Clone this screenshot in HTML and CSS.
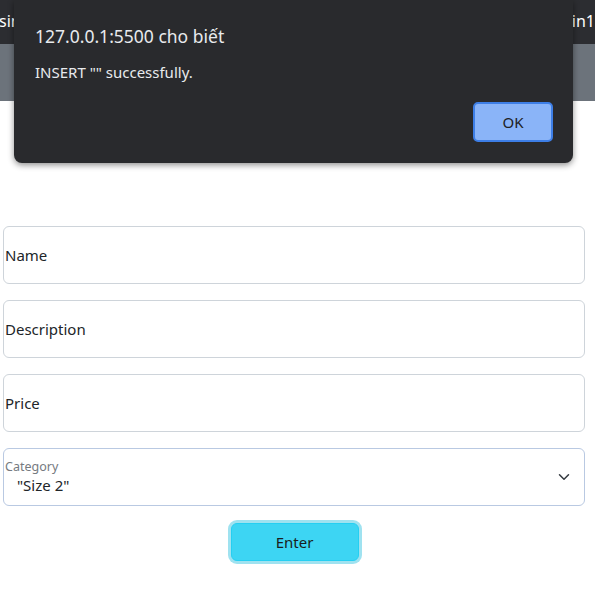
FILE: index.html
```html
<!DOCTYPE html>
<html lang="vi">
<head>
<meta charset="utf-8">
<title>Insert</title>
<link rel="stylesheet" href="styles.css">
</head>
<body>
<nav class="topbar">
  <span class="brand">sin</span>
  <span class="user">admin1</span>
</nav>
<header class="banner"></header>
<main class="page">
  <form class="form">
    <div class="field"><span class="field-label">Name</span></div>
    <div class="field"><span class="field-label">Description</span></div>
    <div class="field"><span class="field-label">Price</span></div>
    <div class="field select-field">
      <span class="small-label">Category</span>
      <span class="select-value">"Size 2"</span>
      <svg class="chevron" viewBox="0 0 16 16" width="16" height="12"><path d="m2 5 6 6 6-6" fill="none" stroke="#343a40" stroke-width="2" stroke-linecap="round" stroke-linejoin="round"/></svg>
    </div>
    <div class="actions"><button type="button" class="btn-enter">Enter</button></div>
  </form>
</main>
<div class="dialog">
  <div class="dialog-title">127.0.0.1:5500 cho biết</div>
  <div class="dialog-msg">INSERT "" successfully.</div>
  <div class="dialog-actions"><button type="button" class="btn-ok">OK</button></div>
</div>
</body>
</html>
```
FILE: styles.css
```css
* { box-sizing: border-box; }
html, body { margin: 0; padding: 0; background: #fff; }
body { font-family: "Open Sans", "Noto Sans", sans-serif; color: #212529; }

.topbar {
  height: 44px;
  background: #2c2d31;
  color: #fff;
  display: flex;
  justify-content: space-between;
  align-items: center;
  font-family: "Noto Sans", sans-serif;
  font-size: 16px;
  padding-bottom: 2px;
}
.brand { margin-left: -1px; }
.banner { height: 57px; background: #6c737b; }

.page { padding: 125px 10px 40px 3px; }
.form { display: flex; flex-direction: column; gap: 16px; width: 582px; }
.field {
  height: 58px;
  border: 1px solid #ced4da;
  border-radius: 6px;
  display: flex;
  align-items: center;
  padding-left: 1px;
  position: relative;
}
.field-label { font-family: "Noto Sans", sans-serif; font-size: 15px; color: #212529; }
.select-field {
  border-color: #b9c9e2;
  flex-direction: column;
  align-items: flex-start;
  justify-content: flex-start;
  padding-top: 9px;
}
.small-label { font-family: "Noto Sans", sans-serif; font-size: 12.5px; color: #757a80; line-height: 17px; }
.select-value { font-family: "Noto Sans", sans-serif; font-size: 15px; color: #212529; margin-left: 12px; line-height: 20px; }
.chevron { position: absolute; right: 12px; top: 22px; }

.actions { display: flex; justify-content: center; margin-top: 1px; padding-left: 1px; }
.btn-enter {
  width: 128px;
  height: 38px;
  background: #3dd5f3;
  border: 1px solid #25cff2;
  border-radius: 6px;
  box-shadow: 0 0 0 3px #9fe2f0;
  font-family: "Noto Sans", sans-serif;
  font-size: 15px;
  color: #1a1d20;
  padding: 0;
}

.dialog {
  position: absolute;
  left: 14px;
  top: 0;
  width: 559px;
  height: 163px;
  background: #292a2d;
  border-radius: 0 0 8px 8px;
  box-shadow: 0 2px 6px rgba(0,0,0,0.45);
  padding: 24px 20px 0 21px;
  color: #e8eaed;
}
.dialog-title { font-family: "Noto Sans", sans-serif; font-size: 17.5px; line-height: 24px; }
.dialog-msg { font-family: "Noto Sans", sans-serif; font-size: 15px; line-height: 20px; margin-top: 14px; }
.dialog-actions { display: flex; justify-content: flex-end; margin-top: 20px; }
.btn-ok {
  width: 80px;
  height: 40px;
  background: #8ab4f8;
  border: 2px solid #3d7ee6;
  border-radius: 5px;
  font-family: "Noto Sans", sans-serif;
  font-size: 15px;
  color: #202124;
  padding: 0;
}
```
